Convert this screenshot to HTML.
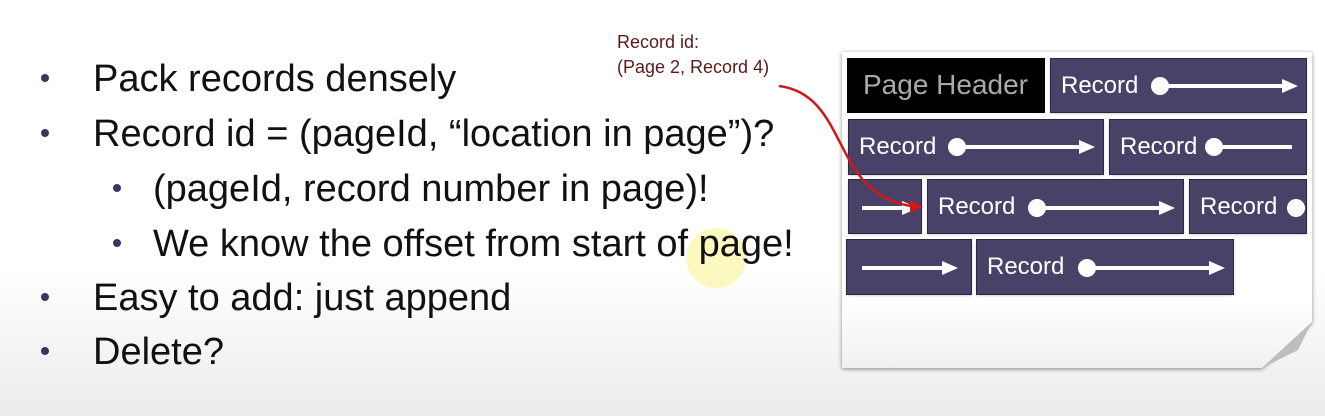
<!DOCTYPE html>
<html><head><style>
body{margin:0;width:1325px;height:416px;overflow:hidden;background:linear-gradient(#fff 0,#fff 270px,#ebebeb 416px);font-family:"Liberation Sans",sans-serif;position:relative}
.t{position:absolute;font-size:38px;color:#111;white-space:nowrap;line-height:1}
.b{position:absolute;width:8px;height:8px;border-radius:50%;background:#3b3560}
.pw{position:absolute;left:842px;top:52px;width:470px;height:316px;filter:drop-shadow(0 1px 2px rgba(0,0,0,.45))}
.page{width:100%;height:100%;background:linear-gradient(#fff 0,#fff 250px,#f0f0f0 316px);clip-path:polygon(0 0,100% 0,100% 270px,420px 100%,0 100%)}
.r{position:absolute;background:#4a4168;box-shadow:0 0 0 1px #2c2545,0 1px 3px rgba(0,0,0,.3);color:#fff;font-size:24px;line-height:54px;overflow:hidden;white-space:nowrap}
.r span{position:absolute;left:10px;top:0}
</style></head><body>
<div style="position:absolute;left:686px;top:228px;width:60px;height:60px;border-radius:50%;background:rgba(250,245,150,.6)"></div>
<div class="b" style="left:41px;top:74px"></div><div class="t" style="left:93px;top:60px">Pack records densely</div>
<div class="b" style="left:41px;top:129px"></div><div class="t" style="left:93px;top:115px">Record id = (pageId, “location in page”)?</div>
<div class="b" style="left:113px;top:184px"></div><div class="t" style="left:153px;top:170px">(pageId, record number in page)!</div>
<div class="b" style="left:113px;top:239px"></div><div class="t" style="left:153px;top:225px">We know the offset from start of page!</div>
<div class="b" style="left:41px;top:293px"></div><div class="t" style="left:93px;top:279px">Easy to add: just append</div>
<div class="b" style="left:41px;top:347px"></div><div class="t" style="left:93px;top:333px">Delete?</div>
<div style="position:absolute;left:617px;top:30px;font-size:18px;color:#5a1a1a;line-height:25px">Record id:<br>(Page 2, Record 4)</div>
<div class="pw"><div class="page"></div></div>
<svg style="position:absolute;left:1262px;top:320px" width="52" height="50"><polygon points="0,48 50,2 36,30" fill="#bdbdbd"/></svg>
<div class="r" style="left:847px;top:58px;width:198px;height:55px;background:#000;box-shadow:none;color:#aaa;font-size:28px"><span style="left:16px">Page Header</span></div>
<div class="r" style="left:1051px;top:59px;width:255px;height:53px"><span>Record</span></div>
<div class="r" style="left:849px;top:120px;width:254px;height:54px"><span>Record</span></div>
<div class="r" style="left:1110px;top:120px;width:196px;height:54px"><span>Record</span></div>
<div class="r" style="left:849px;top:180px;width:72px;height:53px"></div>
<div class="r" style="left:928px;top:180px;width:255px;height:53px"><span>Record</span></div>
<div class="r" style="left:1190px;top:180px;width:116px;height:53px"><span>Record</span></div>
<div class="r" style="left:847px;top:240px;width:124px;height:54px"></div>
<div class="r" style="left:977px;top:240px;width:256px;height:54px"><span>Record</span></div>
<svg style="position:absolute;left:0;top:0" width="1325" height="416" fill="#fff" stroke="#fff">
<g stroke-width="4">
<circle cx="1160" cy="86" r="7"/><line x1="1160" y1="86" x2="1285" y2="86"/><polygon points="1282,79 1298,86 1282,93" stroke="none"/>
<circle cx="957" cy="147" r="7"/><line x1="957" y1="147" x2="1082" y2="147"/><polygon points="1079,140 1095,147 1079,154" stroke="none"/>
<circle cx="1214" cy="147" r="7"/><line x1="1214" y1="147" x2="1292" y2="147"/>
<line x1="862" y1="208" x2="905" y2="208"/><polygon points="902,201 918,208 902,215" stroke="none"/>
<circle cx="1037" cy="208" r="7"/><line x1="1037" y1="208" x2="1162" y2="208"/><polygon points="1159,201 1175,208 1159,215" stroke="none"/>
<circle cx="1296" cy="208" r="7"/><line x1="1296" y1="208" x2="1305" y2="208"/>
<line x1="862" y1="268" x2="944" y2="268"/><polygon points="942,261 958,268 942,275" stroke="none"/>
<circle cx="1087" cy="268" r="7"/><line x1="1087" y1="268" x2="1212" y2="268"/><polygon points="1209,261 1225,268 1209,275" stroke="none"/>
</g>
<path d="M779,86 C850,95 830,195 912,206" fill="none" stroke="#d01818" stroke-width="2.5"/>
<polygon points="910,200 923,207 910,213" fill="#d01818" stroke="none"/>
</svg>
</body></html>
